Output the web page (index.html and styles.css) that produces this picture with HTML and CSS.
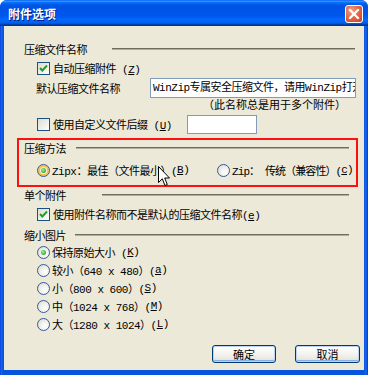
FILE: index.html
```html
<!DOCTYPE html>
<html lang="zh-CN">
<head>
<meta charset="utf-8">
<title>附件选项</title>
<link rel="stylesheet" href="styles.css">
</head>
<body>
<div class="window">
  <div class="titlebar">
    <span class="title">附件选项</span>
    <span class="close"><svg width="12" height="12" viewBox="0 0 12 12"><path d="M2 2 L10 10 M10 2 L2 10" stroke="#fff" stroke-width="2.2" stroke-linecap="square"/></svg></span>
  </div>
  <div class="body">
    <div class="hdr hdr-a"><span class="hdr-text">压缩文件名称</span><i class="rule"></i></div>
    <div class="row ind">
      <span class="cb"><svg width="11" height="11" viewBox="0 0 11 11"><path d="M2 5 L4.3 7.5 L9 2.5" fill="none" stroke="#21A121" stroke-width="2"/></svg></span>
      <span>自动压缩附件 (<u>Z</u>)</span>
    </div>
    <div class="row name-row">
      <span>默认压缩文件名称</span>
      <div class="field name-field">WinZip专属安全压缩文件，请用WinZip打开</div>
    </div>
    <div class="note">（此名称总是用于多个附件）</div>
    <div class="row ind">
      <span class="cb-wrap"><span class="cb"></span><span>使用自定义文件后缀 (<u>U</u>)</span></span>
      <div class="field ext-field"></div>
    </div>
    <div class="hl-box">
      <div class="hdr hdr-b"><span class="hdr-text">压缩方法</span><i class="rule"></i></div>
      <div class="row ind method-row">
        <span class="opt opt-first"><span class="rb on hover"></span>Zipx：最佳（文件最小）(<u>B</u>)</span>
        <span class="opt opt-second"><span class="rb"></span>Zip： 传统（兼容性）(<u>c</u>)</span>
      </div>
    </div>
    <div class="hdr hdr-c"><span class="hdr-text">单个附件</span><i class="rule"></i></div>
    <div class="row ind cb3">
      <span class="cb"><svg width="11" height="11" viewBox="0 0 11 11"><path d="M2 5 L4.3 7.5 L9 2.5" fill="none" stroke="#21A121" stroke-width="2"/></svg></span>
      <span>使用附件名称而不是默认的压缩文件名称(<u>e</u>)</span>
    </div>
    <div class="hdr hdr-d"><span class="hdr-text">缩小图片</span><i class="rule"></i></div>
    <div class="radio-list">
      <div class="rrow ind"><span class="rb on"></span>保持原始大小 (<u>K</u>)</div>
      <div class="rrow ind"><span class="rb"></span>较小（640 x 480）(<u>a</u>)</div>
      <div class="rrow ind"><span class="rb"></span>小（800 x 600）(<u>S</u>)</div>
      <div class="rrow ind"><span class="rb"></span>中（1024 x 768）(<u>M</u>)</div>
      <div class="rrow ind"><span class="rb"></span>大（1280 x 1024）(<u>L</u>)</div>
    </div>
    <div class="buttons">
      <button class="btn btn-ok">确定</button>
      <button class="btn btn-cancel">取消</button>
    </div>
  </div>
  <svg class="cursor" width="13" height="21" viewBox="0 0 13 21"><path d="M0.5 0.5 L0.5 16.5 L4.3 12.8 L7 19.5 L9.3 18.5 L6.7 12 L11.5 12 Z" fill="#fff" stroke="#000" stroke-width="1" stroke-linejoin="miter"/></svg>
</div>
</body>
</html>
```
FILE: styles.css
```css
html, body {
  margin: 0;
  padding: 0;
  background: #ffffff;
}
.window {
  position: relative;
  width: 368px;
  height: 375px;
  box-sizing: border-box;
  background: linear-gradient(to right, #0831D9 0, #166AEE 1px, #0855DD 3px, #0855DD 364px, #166AEE 366px, #0831D9 368px);
  border-radius: 7px 7px 0 0;
  overflow: hidden;
  display: flex;
  flex-direction: column;
  font-family: "Liberation Mono", "Noto Sans CJK SC", monospace;
  font-size: 11px;
  letter-spacing: -0.5px;
  color: #000;
}
.titlebar {
  height: 26px;
  flex: none;
  display: flex;
  align-items: center;
  background: linear-gradient(to bottom, #0058EE 0%, #3593FF 4%, #288EFF 6%, #127DFF 8%, #036FFC 10%, #0262EE 14%, #0057E5 20%, #0054E3 24%, #0055EB 56%, #005BF5 66%, #026AFE 76%, #0062EF 86%, #0052D6 92%, #0040AB 94%, #003092 100%);
}
.title {
  margin-left: 8px;
  font-family: "Noto Sans CJK SC", sans-serif;
  font-weight: bold;
  font-size: 12px;
  letter-spacing: 0;
  color: #fff;
  text-shadow: 1px 1px 0 #0A1883;
}
.close {
  margin-left: auto;
  margin-right: 5px;
  margin-top: 1px;
  width: 18px;
  height: 18px;
  box-sizing: border-box;
  border: 1px solid #fff;
  border-radius: 3px;
  background: radial-gradient(circle at 35% 30%, #F0A08A 0%, #E4684A 45%, #C7401E 100%);
  display: flex;
  align-items: center;
  justify-content: center;
}
.body {
  flex: 1;
  margin: 0 4px 5px 4px;
  background: #ECE9D8;
  padding: 15px 15px 0 20px;
  box-sizing: border-box;
}
.hdr {
  display: flex;
  align-items: center;
  height: 16px;
}
.hdr-text {
  flex: none;
}
.hdr-a .hdr-text { width: 88px; }
.hdr-a .rule { margin-right: -6px; }
.hdr-b .hdr-text { width: 52px; }
.hdr-c .hdr-text { width: 78px; }
.hdr-d .hdr-text { width: 51px; }
.rule {
  flex: 1;
  height: 0;
  border-top: 1px solid #6E6C5E;
  border-bottom: 1px solid #B1AE9E;
}
.row {
  display: flex;
  align-items: center;
  height: 20px;
}
.ind {
  padding-left: 13px;
}
.hdr-a + .row {
  margin-top: 1px;
}
.name-row {
  padding-left: 12px;
}
.field {
  box-sizing: border-box;
  background: #fff;
  border: 1px solid #7F9DB9;
  white-space: nowrap;
  overflow: hidden;
}
.name-field {
  margin-left: auto;
  margin-right: -7px;
  width: 206px;
  height: 20px;
  line-height: 18px;
  padding-left: 2px;
}
.note {
  height: 16px;
  line-height: 16px;
  padding-left: 179px;
  letter-spacing: 0;
}
.cb-wrap {
  display: flex;
  align-items: center;
  width: 150px;
  flex: none;
}
.ext-field {
  width: 70px;
  height: 19px;
}
.cb {
  flex: none;
  width: 13px;
  height: 13px;
  box-sizing: border-box;
  border: 1px solid #1C5180;
  background: linear-gradient(135deg, #DCDCD7 0%, #F4F4F0 70%, #FFFFFF 100%);
  margin-right: 3px;
  display: flex;
  align-items: center;
  justify-content: center;
}
.rb {
  flex: none;
  width: 13px;
  height: 13px;
  box-sizing: border-box;
  border: 1px solid #2F5BA4;
  border-radius: 50%;
  background: radial-gradient(circle at 65% 65%, #FFFFFF 0%, #F2F2EE 40%, #D6D6CE 100%);
  margin-right: 2px;
  position: relative;
}
.rb.on::after {
  content: "";
  position: absolute;
  left: 3px;
  top: 3px;
  width: 5px;
  height: 5px;
  border-radius: 50%;
  background: radial-gradient(circle at 40% 40%, #A8F0A0 0%, #3DB53D 60%, #218A21 100%);
}
.rb.hover {
  box-shadow: inset 0 0 0 2px #F6C14E;
}
.hl-box {
  margin: 4px -9px 0 -7px;
  border: 2px solid #FF1010;
  padding: 0 7px 5px 5px;
  height: 49px;
  box-sizing: border-box;
}
.method-row {
  margin-top: 4px;
  white-space: nowrap;
}
.opt {
  display: flex;
  align-items: center;
  white-space: nowrap;
  flex: none;
}
.opt-first {
  width: 180px;
}
.opt-second {
  letter-spacing: -0.9px;
}
.cb3 {
  margin-top: 1px;
}
.hdr-d {
  margin-top: 3px;
}
.rrow {
  display: flex;
  align-items: center;
  height: 18px;
}
.buttons {
  display: flex;
  justify-content: flex-end;
  gap: 19px;
  margin-top: 12px;
  margin-right: -11px;
}
.btn {
  height: 18px;
  box-sizing: border-box;
  border: 1px solid #003C74;
  border-radius: 3px;
  background: linear-gradient(to bottom, #FFFFFF 0%, #F4F3EE 50%, #E8E6DC 85%, #D6D0C5 100%);
  box-shadow: inset 0 0 0 1px #BCD3F7, inset 0 -1px 0 1px #89ADE4;
  font-family: "Noto Sans CJK SC", sans-serif;
  font-size: 11px;
  letter-spacing: 0;
  color: #000;
  padding: 0;
  line-height: 14px;
}
.btn-ok { width: 64px; }
.btn-cancel { width: 65px; }
.cursor {
  position: absolute;
  left: 158px;
  top: 166px;
}
u {
  text-decoration: underline;
}
```
